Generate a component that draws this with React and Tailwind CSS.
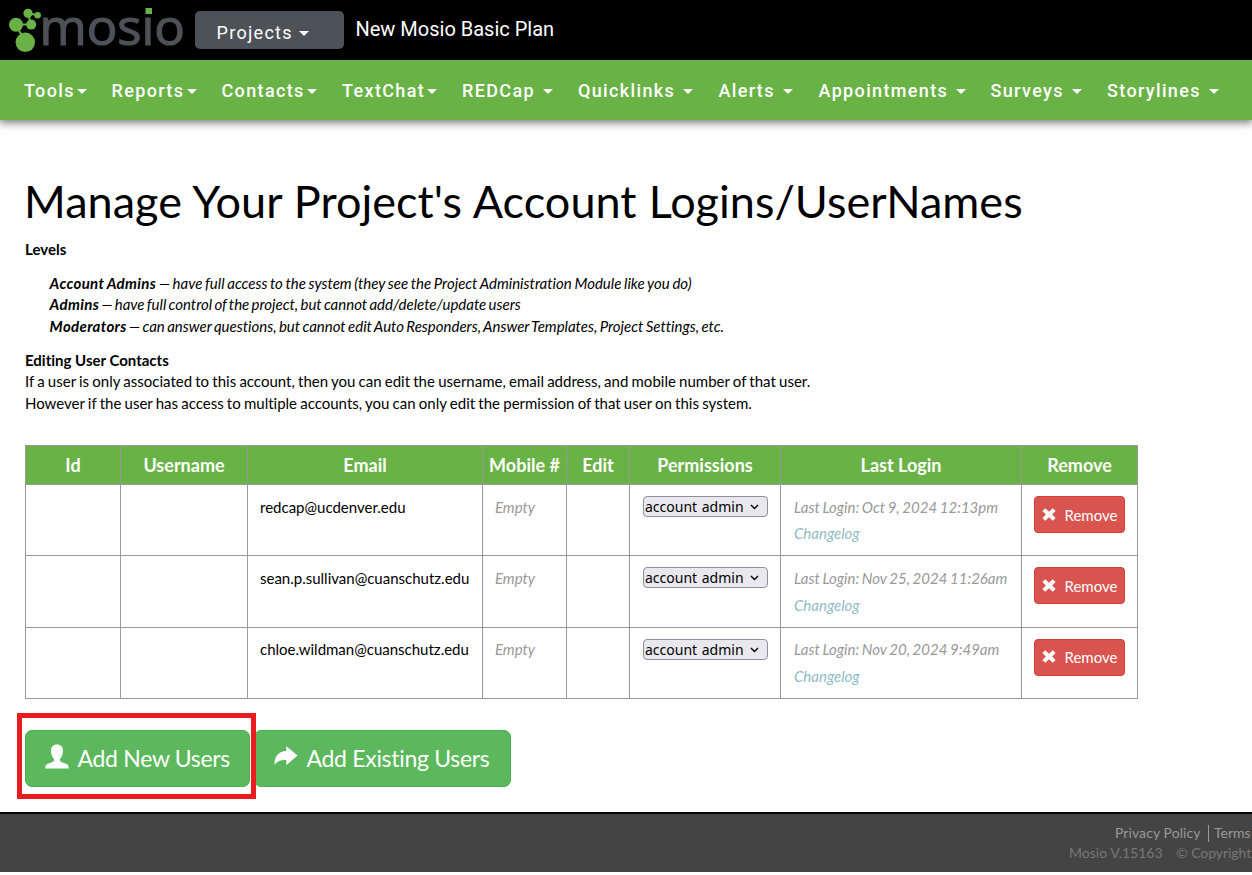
import React from 'react';

const navItems = [
  { label: 'Tools', width: 'w-[87.500px]', gap: 'gap-[2px]' },
  { label: 'Reports', width: 'w-[110px]', gap: 'gap-[2.500px]' },
  { label: 'Contacts', width: 'w-[120.500px]', gap: 'gap-[2px]' },
  { label: 'TextChat', width: 'w-[120px]', gap: 'gap-[2px]' },
  { label: 'REDCap', width: 'w-[116px]', gap: 'gap-[8px]' },
  { label: 'Quicklinks', width: 'w-[140.500px]', gap: 'gap-[8px]' },
  { label: 'Alerts', width: 'w-[100px]', gap: 'gap-[8px]' },
  { label: 'Appointments', width: 'w-[172px]', gap: 'gap-[8px]' },
  { label: 'Surveys', width: 'w-[116.500px]', gap: 'gap-[8px]' },
  { label: 'Storylines', width: 'w-[120px]', gap: 'gap-[8px]' }
];

const columns = [
  { label: 'Id', width: 'w-[95px]' },
  { label: 'Username', width: 'w-[127px]' },
  { label: 'Email', width: 'w-[235px]' },
  { label: 'Mobile #', width: 'w-[84px]' },
  { label: 'Edit', width: 'w-[63px]' },
  { label: 'Permissions', width: 'w-[151px]' },
  { label: 'Last Login', width: 'w-[241px]' },
  { label: 'Remove', width: 'w-[116px]' }
];

const users = [
  {
    email: 'redcap@ucdenver.edu',
    lastLogin: 'Oct 9, 2024 12:13pm',
    height: 'h-[71px]',
    pad: 'pt-[12px]',
    gap: 'mt-[5px]',
    buttonPad: 'pt-[2px]'
  },
  {
    email: 'sean.p.sullivan@cuanschutz.edu',
    lastLogin: 'Nov 25, 2024 11:26am',
    height: 'h-[72px]',
    pad: 'pt-[12px]',
    gap: 'mt-[6px]',
    buttonPad: 'pt-[2px]'
  },
  {
    email: 'chloe.wildman@cuanschutz.edu',
    lastLogin: 'Nov 20, 2024 9:49am',
    height: 'h-[71px]',
    pad: 'pt-[11px]',
    gap: 'mt-[6px]',
    buttonPad: 'pt-0'
  }
];

const levels = [
  {
    name: 'Account Admins',
    text: 'have full access to the system (they see the Project Administration Module like you do)',
    spacing: '[word-spacing:-0.85px]'
  },
  {
    name: 'Admins',
    text: 'have full control of the project, but cannot add/delete/update users',
    spacing: '[word-spacing:-1.25px]'
  },
  {
    name: 'Moderators',
    text: 'can answer questions, but cannot edit Auto Responders, Answer Templates, Project Settings, etc.',
    spacing: '[word-spacing:-1.15px]'
  }
];

function Caret() {
  return (
    <svg width="10" height="5" viewBox="0 0 10 5" className="shrink-0 mt-[1px]">
      <path d="M0 0h10L5 5z" fill="#fff" />
    </svg>
  );
}

function Logo() {
  return (
    <svg width="186" height="60" viewBox="0 0 186 60" className="shrink-0">
      <g stroke="#69b246" strokeWidth="2">
        <path d="M28 13.5L37.5 15M28 13.5L31 24.5M16 24.5H31M16 24.5L25 42" fill="none" />
      </g>
      <g fill="#69b246">
        <circle cx="28" cy="13.3" r="4.6" />
        <circle cx="37.6" cy="15.2" r="3.3" />
        <circle cx="16" cy="24.8" r="7" />
        <circle cx="31.2" cy="24.6" r="5" />
        <circle cx="25.3" cy="42.3" r="9.7" />
      </g>
      <text
        x="39.5"
        y="44.5"
        textLength="145.5"
        lengthAdjust="spacingAndGlyphs"
        fontSize="49"
        fill="#4d5158"
        stroke="#4d5158"
        strokeWidth="1.2"
        className="font-['Open_Sans',sans-serif]"
      >
        mosio
      </text>
      <rect x="143" y="4" width="12" height="11" fill="#000" />
      <rect x="145.5" y="8" width="6.5" height="6" fill="#69b246" />
    </svg>
  );
}

function UserIcon() {
  return (
    <svg width="24" height="25" viewBox="0 0 24 25" className="mb-[4px] shrink-0">
      <path
        d="M12 0.5c3.8 0 6 2.4 6 6.3 0 3.6-1.3 6.6-3 8.2-.4 1.5.2 2.3 1.6 2.9l5 2.2c1.4.7 2 1.7 2.2 4.4H0.2c.2-2.7.8-3.7 2.2-4.4l5-2.2c1.4-.6 2-1.4 1.6-2.9-1.7-1.6-3-4.6-3-8.2 0-3.900 2.200-6.300 6-6.300z"
        fill="#fff"
      />
    </svg>
  );
}

function ShareIcon() {
  return (
    <svg width="24" height="20" viewBox="0 0 24 20" className="mb-[5px] shrink-0">
      <path d="M12.300 0.300L23.600 9.600 12.300 19.200V14C7 13.600 3 15 .5 19 .2 10.500 4.500 5.300 12.300 5z" fill="#fff" />
    </svg>
  );
}

function RemoveIcon() {
  return (
    <svg width="14" height="13" viewBox="0 0 14 13" className="mb-[2px] shrink-0">
      <path
        d="M3.200 0.300L7 3.800 10.800 0.300 13.600 3 10.100 6.500 13.600 10 10.800 12.700 7 9.200 3.200 12.700 0.400 10 3.900 6.500 0.400 3z"
        fill="#fff"
      />
    </svg>
  );
}

export default function App() {
  return (
    <div className="h-[875px] w-[1252px] overflow-hidden bg-white font-[Lato,sans-serif] text-[15px] leading-[21.43px] text-black [font-variant-ligatures:none]">
      <header className="flex h-[60px] bg-black font-[Roboto,sans-serif] text-white">
        <Logo />
        <button className="mt-[11px] ml-[9px] flex h-[38px] w-[149px] items-center gap-[6px] rounded-[5px] bg-[#4d5158] pt-[5px] pl-[21.500px] text-[18px] tracking-[1.3px]">
          Projects
          <Caret />
        </button>
        <div className="mt-[15px] ml-[11.500px] text-[20px] leading-[28px] whitespace-nowrap">New Mosio Basic Plan</div>
      </header>

      <nav className="flex h-[60px] items-center bg-[#69b246] pt-[2px] pl-[24px] font-[Roboto,sans-serif] text-[18px] font-medium tracking-[1.35px] text-white shadow-[0_2px_8px_1px_rgba(0,0,0,0.5)]">
        {navItems.map((item) => (
          <a key={item.label} className={`flex shrink-0 items-center whitespace-nowrap ${item.width} ${item.gap}`}>
            {item.label}
            <Caret />
          </a>
        ))}
      </nav>

      <main className="h-[692px] px-[25px] pt-[56px]">
        <h1 className="-ml-px text-[45px] leading-[50px] tracking-[0.03px] whitespace-nowrap [word-spacing:0.6px]">
          Manage Your Project's Account Logins/UserNames
        </h1>
        <p className="mt-[13px] font-bold">Levels</p>
        <div className="mt-[12.600px] mb-[12.400px] pl-[24.600px] italic">
          {levels.map((level) => (
            <p key={level.name} className={`whitespace-nowrap ${level.spacing}`}>
              <b className="tracking-[0.35px]">{level.name}</b> — {level.text}
            </p>
          ))}
        </div>
        <p className="font-bold">Editing User Contacts</p>
        <div className="[word-spacing:-0.62px]">
          <p>If a user is only associated to this account, then you can edit the username, email address, and mobile number of that user.</p>
          <p>However if the user has access to multiple accounts, you can only edit the permission of that user on this system.</p>
        </div>

        <table className="mt-[31px] w-[1113px] table-fixed border-collapse">
          <thead>
            <tr className="h-[39px] bg-[#69b246] text-[18px] text-white">
              {columns.map((col) => (
                <th key={col.label} className={`border border-[#999] p-0 pt-[2px] font-bold whitespace-nowrap ${col.width}`}>
                  {col.label}
                </th>
              ))}
            </tr>
          </thead>
          <tbody>
            {users.map((user) => (
              <tr key={user.email} className={`align-top ${user.height}`}>
                <td className="border border-[#999]" />
                <td className="border border-[#999]" />
                <td className={`border border-[#999] p-0 pl-[12px] whitespace-nowrap ${user.pad}`}>{user.email}</td>
                <td className={`border border-[#999] p-0 pl-[12px] text-[#999] italic ${user.pad}`}>Empty</td>
                <td className="border border-[#999]" />
                <td className="border border-[#999] p-0 pt-[11px] pl-[13px]">
                  <div className="flex h-[21px] w-[125px] items-center justify-between rounded-[4px] border border-[#8f8f9d] bg-[#e9e9ed] pr-[8px] pl-[1px] font-['Noto_Sans',sans-serif] text-[14px] whitespace-nowrap [word-spacing:1px]">
                    account admin
                    <svg width="9" height="6" viewBox="0 0 9 6" className="shrink-0">
                      <path d="M1 1l3.500 3.500L8 1" fill="none" stroke="#000" strokeWidth="1.400" />
                    </svg>
                  </div>
                </td>
                <td className={`border border-[#999] p-0 pl-[13px] whitespace-nowrap text-[#999] italic ${user.pad}`}>
                  <div className="[word-spacing:-0.9px]">Last Login: {user.lastLogin}</div>
                  <div className={`text-[#8fbcc4] ${user.gap}`}>Changelog</div>
                </td>
                <td className="border border-[#999] p-0 pt-[11px] pl-[12px]">
                  <button
                    className={`flex h-[37px] w-[91px] items-center gap-[8.500px] rounded-[4px] border border-[#d43f3a] bg-[#d9534f] pl-[7px] text-white ${user.buttonPad}`}
                  >
                    <RemoveIcon />
                    Remove
                  </button>
                </td>
              </tr>
            ))}
          </tbody>
        </table>

        <div className="relative mt-[31px] flex text-[23px] tracking-[-0.3px] text-white [word-spacing:-1.2px]">
          <button className="flex h-[57px] w-[225px] items-center gap-[8.500px] rounded-[7px] border border-[#4cae4c] bg-[#5cb85c] pl-[19px] whitespace-nowrap">
            <UserIcon />
            Add New Users
          </button>
          <button className="ml-[4px] flex h-[57px] w-[257px] items-center gap-[8.500px] rounded-[7px] border border-[#4cae4c] bg-[#5cb85c] pl-[19px] whitespace-nowrap">
            <ShareIcon />
            Add Existing Users
          </button>
          <div className="absolute top-[-17px] left-[-8px] h-[86px] w-[239px] border-[5px] border-[#ea1c1f]" />
        </div>
      </main>

      <footer className="h-[60px] border-t-2 border-black bg-[#444] pt-[9px] text-[14px] leading-[20px]">
        <div className="flex items-center pl-[1115px] whitespace-nowrap text-[#999]">
          <a className="tracking-[0.08px]">Privacy Policy</a>
          <span className="mr-[5.500px] ml-[7px] h-[17px] w-px bg-[#999]" />
          <a>Terms</a>
        </div>
        <div className="flex pl-[1069px] whitespace-nowrap text-[#777]">
          <span>Mosio V.15163</span>
          <span className="ml-[13.500px] tracking-[-0.05px]">© Copyright</span>
        </div>
      </footer>
    </div>
  );
}
